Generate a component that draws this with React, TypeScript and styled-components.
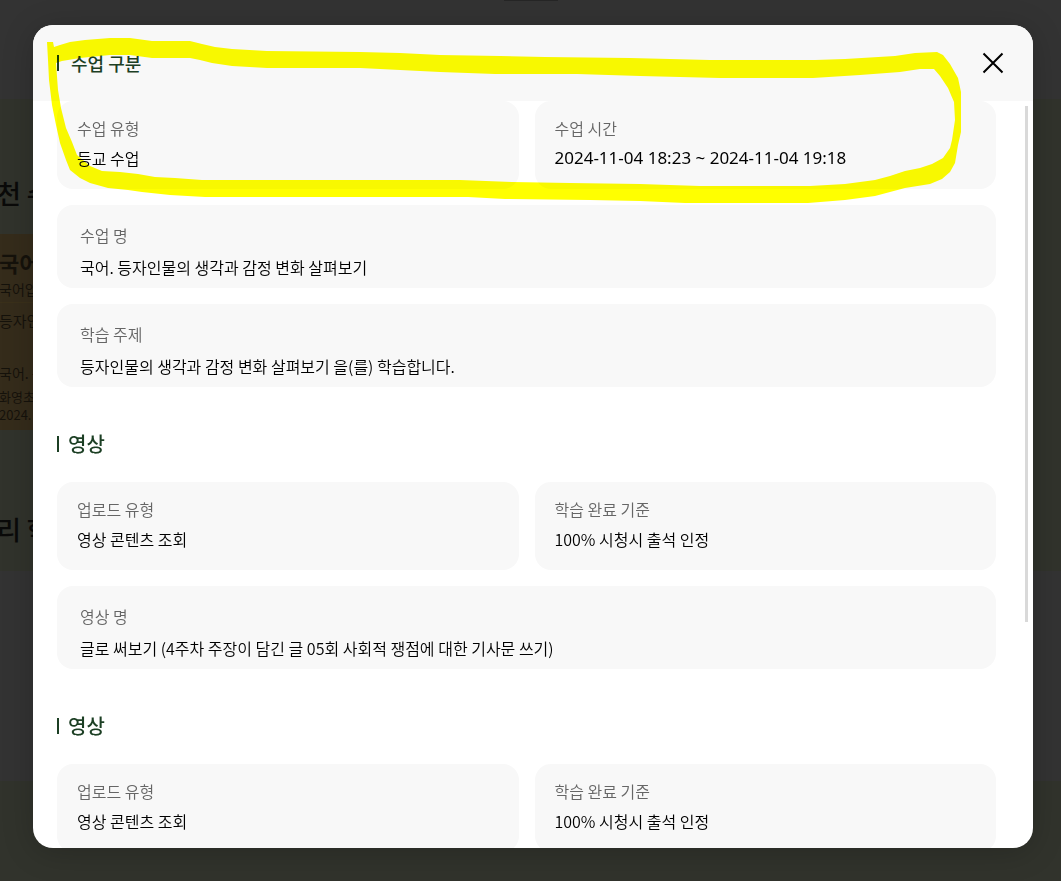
import React from "react";
import styled, { createGlobalStyle } from "styled-components";

const GlobalStyle = createGlobalStyle`
  * { box-sizing: border-box; }
  html, body, #root { height: 100%; }
  body {
    margin: 0;
    overflow: hidden;
    background: #333;
    font-family: "Noto Sans CJK KR", "Noto Sans", sans-serif;
  }
  h1, h2, p, dl, dt, dd { margin: 0; font-weight: inherit; }
`;

const Backdrop = styled.div`
  height: 100vh;
  overflow: hidden;
  display: flex;
  flex-direction: column;
  white-space: nowrap;
  color: #0a0a09;
`;

const Band = styled.div<{ $height: number; $tinted?: boolean }>`
  flex: none;
  height: ${(p) => p.$height}px;
  background: ${(p) => (p.$tinted ? "#31332c" : "#333333")};
`;

const LastBand = styled.div`
  flex: 1;
  background: #31332c;
`;

const TabMark = styled.div`
  width: 54px;
  height: 1px;
  margin: 0 auto;
  background: #262626;
`;

const BackTitle = styled.p<{ $top: number }>`
  padding-top: ${(p) => p.$top}px;
  font-size: 26px;
  line-height: 40px;
  font-weight: 500;
  text-indent: -3px;
`;

const BackCard = styled.div`
  width: 240px;
  height: 196px;
  margin-top: 21px;
  padding-top: 14px;
  background: #352c1b;
  color: #15120b;
  text-indent: -1px;
`;

const BackCardHead = styled.div`
  border-bottom: 1px solid #3a301a;
`;

const BackLine = styled.p<{ $size: number; $height: number; $bold?: boolean }>`
  font-size: ${(p) => p.$size}px;
  line-height: ${(p) => p.$height}px;
  font-weight: ${(p) => (p.$bold ? 700 : 400)};
`;

const BackMeta = styled.div`
  padding-top: 20px;
`;

const Overlay = styled.div`
  position: fixed;
  inset: 0;
  display: flex;
  padding: 25px 28px 33px 33px;
`;

const Dialog = styled.section`
  position: relative;
  flex: 1;
  min-width: 0;
  display: flex;
  flex-direction: column;
  overflow: hidden;
  border-radius: 20px;
  background: #fff;
  box-shadow: 0 4px 32px rgba(0, 0, 0, 0.2);
`;

const Header = styled.header`
  flex: none;
  height: 76px;
  display: flex;
  align-items: center;
  justify-content: space-between;
  padding: 0 24px;
  background: #f8f8f8;
`;

const Title = styled.h2<{ $main?: boolean }>`
  display: flex;
  align-items: center;
  gap: ${(p) => (p.$main ? 12 : 9)}px;
  font-size: ${(p) => (p.$main ? 18 : 20)}px;
  line-height: ${(p) => (p.$main ? 28 : 30)}px;
  font-weight: 500;
  color: #1c3f24;

  &::before {
    content: "";
    width: 2px;
    height: 16px;
    background: #1c3f24;
  }
`;

const CloseButton = styled.button`
  display: flex;
  padding: 0;
  border: 0;
  background: none;
  cursor: pointer;
`;

const Body = styled.div`
  flex: 1;
  min-height: 0;
  overflow-y: auto;
  scrollbar-width: none;
  padding: 0 37px 24px 24px;
`;

const Section = styled.section`
  display: flex;
  flex-direction: column;
  gap: 16px;

  & + & { margin-top: 42px; }
  & > ${Title} { margin-bottom: 7px; }
`;

const Fields = styled.dl`
  display: grid;
  grid-template-columns: 1fr 1fr;
  gap: 16px;
`;

const Card = styled.div<{ $wide?: boolean }>`
  grid-column: ${(p) => (p.$wide ? "1 / -1" : "auto")};
  height: ${(p) => (p.$wide ? 83 : 88)}px;
  padding: ${(p) => (p.$wide ? "14px 23px 0" : "12px 20px 0")};
  border-radius: 16px;
  background: #f8f8f8;
  font-size: 16px;
  line-height: ${(p) => (p.$wide ? 32 : 30)}px;
`;

const Label = styled.dt`
  color: #666;
  font-weight: 350;
`;

const Value = styled.dd<{ $date?: boolean }>`
  color: #000;
  font-weight: 350;
  ${(p) => p.$date && `font-family: "Noto Sans", sans-serif; font-size: 17px; font-weight: 400;`}
`;

const ScrollThumb = styled.div`
  position: absolute;
  top: 81px;
  right: 5px;
  width: 3px;
  height: 516px;
  background: #d9d9d9;
`;

const Marker = styled.svg`
  position: absolute;
  top: 0;
  left: 0;
  mix-blend-mode: multiply;
  pointer-events: none;
`;

type Item = { label: string; value: string; wide?: boolean; date?: boolean };

const lesson: Item[] = [
  { label: "수업 유형", value: "등교 수업" },
  { label: "수업 시간", value: "2024-11-04 18:23 ~ 2024-11-04 19:18", date: true },
  { label: "수업 명", value: "국어. 등자인물의 생각과 감정 변화 살펴보기", wide: true },
  { label: "학습 주제", value: "등자인물의 생각과 감정 변화 살펴보기 을(를) 학습합니다.", wide: true },
];

const video: Item[] = [
  { label: "업로드 유형", value: "영상 콘텐츠 조회" },
  { label: "학습 완료 기준", value: "100% 시청시 출석 인정" },
  { label: "영상 명", value: "글로 써보기 (4주차 주장이 담긴 글 05회 사회적 쟁점에 대한 기사문 쓰기)", wide: true },
];

function FieldGrid({ items }: { items: Item[] }) {
  return (
    <Fields>
      {items.map((item) => (
        <Card key={item.label} $wide={item.wide}>
          <Label>{item.label}</Label>
          <Value $date={item.date}>{item.value}</Value>
        </Card>
      ))}
    </Fields>
  );
}

export default function App() {
  return (
    <>
      <GlobalStyle />
      <Backdrop aria-hidden="true">
        <Band $height={99}>
          <TabMark />
        </Band>
        <Band $height={472} $tinted>
          <BackTitle $top={74}>천 수</BackTitle>
          <BackCard>
            <BackCardHead>
              <BackLine $size={22} $height={28} $bold>국어</BackLine>
              <BackLine $size={14} $height={26}>국어입</BackLine>
            </BackCardHead>
            <BackLine $size={15} $height={36}>등자인</BackLine>
            <BackMeta>
              <BackLine $size={14} $height={28}>국어. 등</BackLine>
              <BackLine $size={13} $height={20}>화영초</BackLine>
              <BackLine $size={13} $height={16}>2024.</BackLine>
            </BackMeta>
          </BackCard>
          <BackTitle $top={79}>리 학</BackTitle>
        </Band>
        <Band $height={210} />
        <LastBand />
      </Backdrop>
      <Overlay>
        <Dialog role="dialog" aria-modal="true" aria-labelledby="dialog-title">
          <Header>
            <Title $main id="dialog-title">수업 구분</Title>
            <CloseButton type="button" aria-label="닫기">
              <svg width="32" height="32" viewBox="0 0 32 32" fill="none" stroke="#000" strokeWidth="2">
                <path d="M6.5 6.5 25.5 25.5M25.5 6.5 6.5 25.5" />
              </svg>
            </CloseButton>
          </Header>
          <Body>
            <Section>
              <FieldGrid items={lesson} />
            </Section>
            <Section>
              <Title>영상</Title>
              <FieldGrid items={video} />
            </Section>
            <Section>
              <Title>영상</Title>
              <FieldGrid items={video} />
            </Section>
          </Body>
          <ScrollThumb />
        </Dialog>
        <Marker width="1000" height="220" viewBox="0 0 1000 220" aria-hidden="true">
          <path
            fill="#ff0"
            fillRule="evenodd"
            d="M47 42H53L54 47L60 45L70 42L85 40L110 38H130L152 41H190L202 44L215 47L232 49L267 51L360 52L400 53L440 55L500 56L545 57L630 58L710 60H815L845 59L895 56L915 53L937 52L943 55L950 64L958 78L961 92V132L958 145L955 163L950 172L942 179L930 184L905 188L890 192L875 196L845 200L808 203H685L640 201L590 200L505 199L468 197H205L170 195L142 192L128 190L108 188L90 183L80 178L70 170L66 160L60 143L56 125L52 105L49 80L48 60Z
            M56 63L62 61L80 58L110 55H130L152 58H190L200 60L212 63L232 66L267 68H360L400 70L440 72L495 74H577L640 76L720 78H813L860 75L900 72L920 69H934L940 76L948 88L954 102L955 120L952 140L950 148L943 158L932 164L920 168L905 171L890 176L875 180L845 184L810 186H700L640 184L570 183L512 182L460 180H202L175 178L155 177L138 174L120 172L102 171L90 166L83 160L77 155L72 142L66 128L61 108L58 90Z"
          />
        </Marker>
      </Overlay>
    </>
  );
}
